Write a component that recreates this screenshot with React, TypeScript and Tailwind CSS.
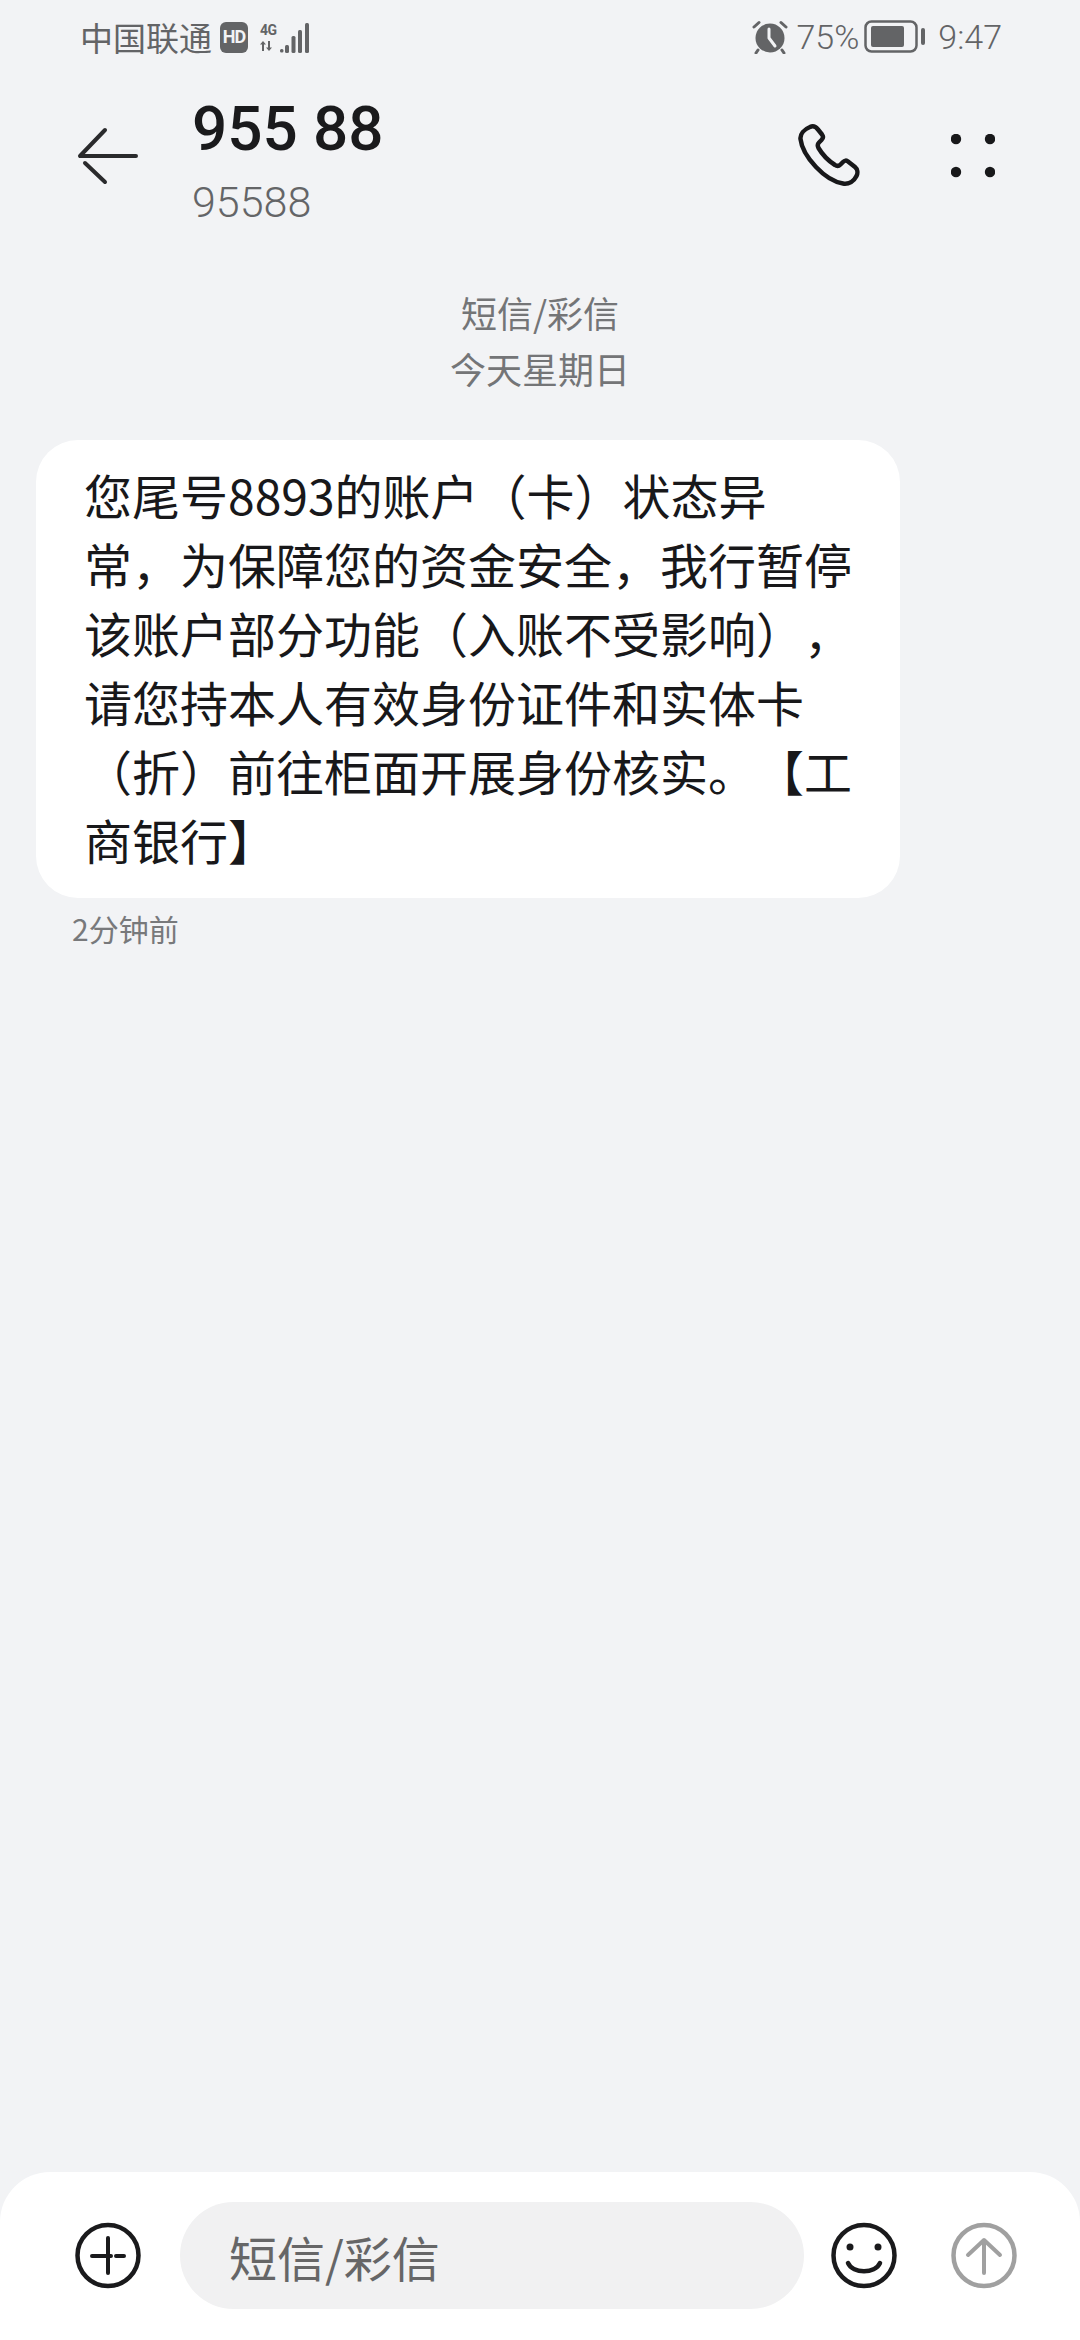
import React from 'react';

const cjk = '"Noto Sans CJK SC", "Noto Sans", sans-serif';
const digits = 'Roboto, "Noto Sans CJK SC", sans-serif';

const lines = [
  '您尾号8893的账户（卡）状态异',
  '常，为保障您的资金安全，我行暂停',
  '该账户部分功能（入账不受影响），',
  '请您持本人有效身份证件和实体卡',
  '（折）前往柜面开展身份核实。【工',
  '商银行】',
];

const StatusBar = () => (
  <div className="flex h-[74px] items-center justify-between pl-[80px] pr-[78px] text-[#636466]">
    <div className="flex items-center">
      <span className="text-[33px] leading-none font-['Noto_Sans_CJK_SC',sans-serif]">中国联通</span>
      <span className="ml-[8px] flex h-[31px] w-[28px] items-center justify-center rounded-[6px] bg-[#636466] text-[18px] font-bold leading-none text-[#f2f3f5] font-['Roboto',sans-serif] tracking-[-1px]">
        HD
      </span>
      <div className="ml-[12px] flex w-[18px] flex-col">
        <span className="text-[14px] font-bold leading-[14px] font-['Roboto',sans-serif] tracking-[-0.5px]">4G</span>
        <svg width="18" height="10" viewBox="0 0 18 10" className="mt-[4px]" fill="currentColor">
          <path d="M3 0 L6 3.6 H4 V10 H2 V3.6 H0 Z" />
          <path d="M10 10 L7 6.4 H9 V0 H11 V6.4 H13 Z" transform="translate(-1 0)" />
        </svg>
      </div>
      <svg width="30" height="31" viewBox="0 0 30 31" className="ml-[2px]" fill="currentColor">
        <rect x="0" y="27" width="3.5" height="3.5" rx="1.5" />
        <rect x="5" y="23" width="4" height="8" rx="1.5" />
        <rect x="11.5" y="14" width="4" height="17" rx="1.5" />
        <rect x="18" y="8" width="4" height="23" rx="1.5" />
        <rect x="25" y="1" width="4" height="30" rx="1.5" />
      </svg>
    </div>
    <div className="flex items-center">
      <svg width="36" height="34" viewBox="0 0 36 34" fill="none">
        <circle cx="18" cy="18" r="14.5" fill="#636466" />
        <path d="M17 9 V18 L23 26" stroke="#f2f3f5" strokeWidth="3" strokeLinecap="round" strokeLinejoin="round" />
        <path d="M2 7 L7 2.5 M34 7 L29 2.5" stroke="#636466" strokeWidth="3" strokeLinecap="round" />
        <path d="M6 30 L4 33 M30 30 L32 33" stroke="#636466" strokeWidth="3" strokeLinecap="round" />
      </svg>
      <span className="ml-[8px] text-[34px] leading-none font-['Roboto',sans-serif] font-light">75%</span>
      <svg width="62" height="34" viewBox="0 0 62 34" className="ml-[5px]" fill="none">
        <rect x="1.5" y="1.5" width="51" height="30" rx="6" stroke="#636466" strokeWidth="2.5" />
        <rect x="7" y="6" width="33" height="21" rx="2" fill="#636466" />
        <rect x="57" y="8" width="4" height="17" rx="2" fill="#636466" />
      </svg>
      <span className="ml-[12px] text-[34px] leading-none font-['Roboto',sans-serif] font-light">9:47</span>
    </div>
  </div>
);

const Header = () => (
  <div className="flex h-[166px] items-start pl-[76px] pr-[85px]">
    <svg width="64" height="60" viewBox="0 0 64 60" className="mt-[52px]" fill="none" stroke="#2a2a2c" strokeWidth="4" strokeLinecap="round">
      <path d="M29 4 L4 30 H60" strokeLinejoin="round" />
      <path d="M9 37 L29 56" />
    </svg>
    <div className="ml-[52px] flex flex-col">
      <span className="mt-[21px] text-[62px] font-medium leading-[68px] text-[#1a1a1c]" style={{ fontFamily: digits }}>955 88</span>
      <span className="mt-[14px] text-[43px] font-light leading-[50px] text-[#646567]" style={{ fontFamily: digits }}>95588</span>
    </div>
    <div className="ml-auto flex items-start">
      <svg width="62" height="64" viewBox="0 0 62 64" className="mt-[50px]" fill="none" stroke="#18181a" strokeWidth="4.5" strokeLinejoin="round">
        <path d="M12 3 C15 1.5 18 3 20 5.5 L24 10.5 C25.5 12.5 25 14.5 23.5 16 L21 18.5 C19.5 20 19.5 22 20.5 24 C24 30 30 36.5 37 41 C39 42.5 41 42 42.5 40.5 L45 38 C46.5 36.5 48.5 36 50 37.5 L57 43 C59.5 45 60 49 58.5 52 C56 57 51 60.5 45 59.5 C36 58 26 51.5 18 43 C10 34.5 3.5 24 2.5 15 C2 10 6 5.5 12 3 Z" />
      </svg>
      <svg width="44" height="44" viewBox="0 0 44 44" className="ml-[91px] mt-[60px]" fill="#18181a">
        <circle cx="5" cy="5" r="5.2" />
        <circle cx="39" cy="5" r="5.2" />
        <circle cx="5" cy="38" r="5.2" />
        <circle cx="39" cy="38" r="5.2" />
      </svg>
    </div>
  </div>
);

const Composer = () => (
  <div className="flex h-[168px] items-start rounded-t-[50px] bg-white pl-[75px] pt-[30px]">
    <svg width="66" height="68" viewBox="0 0 66 68" className="mt-[20px]" fill="none" stroke="#1a1a1c" strokeWidth="4.5" strokeLinecap="round">
      <circle cx="33" cy="33.5" r="30.5" />
      <path d="M33 16 V51" strokeWidth="4" />
      <path d="M17 34 H36 M41 34 H49" strokeWidth="4" />
    </svg>
    <div className="ml-[39px] flex h-[107px] w-[624px] items-center rounded-full bg-[#f1f1f2] pl-[49px]">
      <span className="text-[48px] leading-none text-[#666667]" style={{ fontFamily: cjk }}>短信/彩信</span>
    </div>
    <svg width="66" height="68" viewBox="0 0 66 68" className="ml-[27px] mt-[20px]" fill="none" stroke="#1a1a1c" strokeWidth="4.5" strokeLinecap="round">
      <circle cx="33" cy="33.5" r="30.5" />
      <circle cx="19" cy="25" r="3.5" fill="#1a1a1c" stroke="none" />
      <circle cx="47" cy="25" r="3.5" fill="#1a1a1c" stroke="none" />
      <path d="M17 41 C22 52 44 52 49 41" />
    </svg>
    <svg width="66" height="68" viewBox="0 0 66 68" className="ml-[54px] mt-[20px]" fill="none" stroke="#a0a0a0" strokeWidth="4.5" strokeLinecap="round" strokeLinejoin="round">
      <circle cx="33" cy="33.5" r="30.5" />
      <path d="M33 51 V19 M17 33 L33 18 L49 33" strokeWidth="4" />
    </svg>
  </div>
);

export default function App() {
  return (
    <div className="flex h-[2340px] w-[1080px] flex-col overflow-hidden bg-[#f2f3f5]" style={{ fontFamily: cjk }}>
      <StatusBar />
      <Header />
      <div className="flex min-h-0 flex-1 flex-col">
        <div className="mt-[44px] flex flex-col items-center text-[36px] leading-[56px] text-[#747577]">
          <span>短信/彩信</span>
          <span>今天星期日</span>
        </div>
        <div className="ml-[36px] mt-[44px] w-[864px] rounded-[42px] bg-white pb-[24px] pl-[48px] pt-[20px] text-[48px] leading-[69px] text-[#18181a] [text-spacing-trim:space-all]">
          {lines.map((l) => (
            <div key={l} className="whitespace-nowrap">{l}</div>
          ))}
        </div>
        <div className="ml-[72px] mt-[7px] text-[30px] leading-[46px] text-[#78797b]">2分钟前</div>
      </div>
      <Composer />
    </div>
  );
}
